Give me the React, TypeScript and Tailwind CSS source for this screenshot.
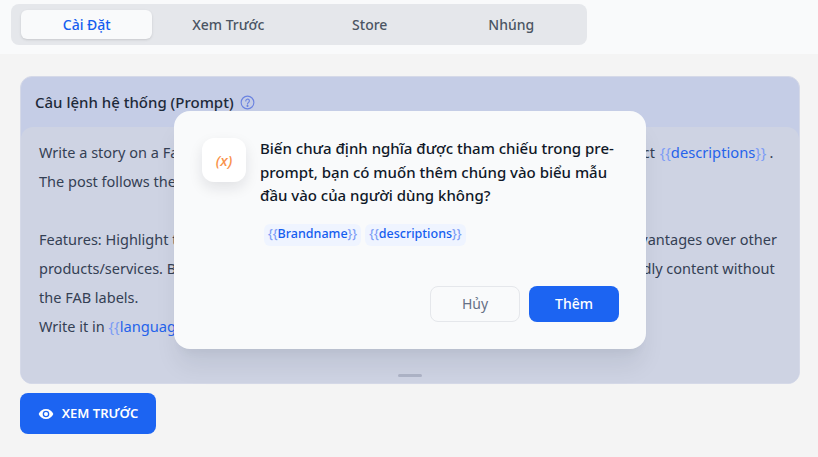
import React from 'react'

const tabs = ['Cài Đặt', 'Xem Trước', 'Store', 'Nhúng']

const Var = ({ children }: { children: React.ReactNode }) => (
  <span className="text-[14.7px] text-[#2563eb]">
    <span className="text-[#7c9cf5]">{'{{'}</span>{children}<span className="text-[#7c9cf5]">{'}}'}</span>
  </span>
)

const Chip = ({ name }: { name: string }) => (
  <span className="flex h-[22px] items-center rounded-md bg-[#eff4ff] px-[4px] text-[12.5px] font-medium text-[#155eef]">
    <span className="text-[#7c9cf5]">{'{{'}</span>{name}<span className="text-[#7c9cf5]">{'}}'}</span>
  </span>
)

export default function App() {
  return (
    <div className="flex h-[457px] w-[818px] flex-col overflow-hidden bg-[#f4f4f4] font-['Noto_Sans',sans-serif]">
      <div className="flex h-[54px] shrink-0 items-start bg-[#f9fafb] pl-[11px] pt-[4px]">
        <div className="flex h-[41px] w-[576px] items-center rounded-lg bg-[#e5e7eb] px-[5px]">
          {tabs.map((t, i) => (
            <div key={t} className="flex h-[29px] flex-1 items-center justify-center">
              {i === 0 ? (
                <div className="flex h-[29px] w-[131px] items-center justify-center rounded-md bg-[#f9fafb] text-sm font-medium text-[#155eef] shadow-sm">
                  {t}
                </div>
              ) : (
                <span className="text-sm font-medium text-[#4b5563]">{t}</span>
              )}
            </div>
          ))}
        </div>
      </div>

      <div className="relative flex-1 pl-5 pr-[18px] pt-[22px]">
        <div className="flex h-[308px] flex-col overflow-hidden rounded-xl border border-[#d5d9e8] bg-[#c5cde6]">
          <div className="flex h-[50px] shrink-0 items-center gap-[6px] px-[14px] text-[15px] font-medium text-[#1d2939]">
            Câu lệnh hệ thống (Prompt)
            <svg width="15" height="15" viewBox="0 0 16 16" fill="none" stroke="#6b83e0" strokeWidth="1.2">
              <circle cx="8" cy="8" r="6.8" />
              <path d="M6.2 6.3a1.9 1.9 0 1 1 2.9 1.6c-.7.4-1.1.8-1.1 1.6" strokeLinecap="round" />
              <circle cx="8" cy="11.6" r=".5" fill="#6b83e0" />
            </svg>
          </div>
          <div className="relative flex-1 rounded-t-xl bg-[#ced3e3] px-[18px] pt-[11px] text-[14.5px] leading-[29px] text-[#344054]">
            <div className="whitespace-nowrap">Write a story on a Facebook post for the brands {'{{'}Brandname{'}}'} that are about this product <span className="ml-[1px]"><Var>descriptions</Var></span><span className="ml-[3px]">.</span></div>
            <div className="whitespace-nowrap">The post follows the FAB formula as shown below.</div>
            <div className="h-[29px]" />
            <div className="whitespace-nowrap">Features: Highlight the outstanding features of the product, show all of the very main advantages over other</div>
            <div className="whitespace-nowrap">products/services. Benefits: Explain the value and the usefulness to the customer in friendly content without</div>
            <div className="whitespace-nowrap">the FAB labels.</div>
            <div className="whitespace-nowrap">Write it in <Var>language</Var></div>
            <div className="absolute bottom-[6px] left-1/2 h-[3px] w-[24px] -translate-x-1/2 rounded-sm bg-[#aeb4c7]" />
          </div>
        </div>
        <button className="mt-[9px] flex h-[41px] w-[136px] items-center justify-center gap-[8px] rounded-lg bg-[#1c64f2] text-[13px] font-semibold text-white">
          <svg width="16" height="16" viewBox="0 0 24 24" fill="white">
            <path d="M12 4.5C7 4.5 2.7 7.6 1 12c1.7 4.4 6 7.5 11 7.5s9.300-3.100 11-7.500c-1.700-4.400-6-7.500-11-7.500zm0 12.500a5 5 0 1 1 0-10 5 5 0 0 1 0 10zm0-8a3 3 0 1 0 0 6 3 3 0 0 0 0-6z" />
          </svg>
          XEM TRƯỚC
        </button>
      </div>

      <div className="absolute left-[174px] top-[111px] flex h-[238px] w-[472px] flex-col rounded-2xl bg-[#f9fafb] pl-[28px] pr-[27px] pt-[27px] shadow-[0_20px_24px_-4px_rgba(16,24,40,0.08),0_8px_8px_-4px_rgba(16,24,40,0.03)]">
        <div className="flex gap-[14px]">
          <div className="flex h-[44px] w-[44px] shrink-0 items-center justify-center rounded-xl bg-white text-[15px] font-medium italic text-[#f9924a] shadow-[0_6px_14px_rgba(16,24,40,0.1)]">
            (x)
          </div>
          <div className="-mt-px text-[15px] font-medium leading-[23.5px] text-[#101828]">
            Biến chưa định nghĩa được tham chiếu trong pre-prompt, bạn có muốn thêm chúng vào biểu mẫu đầu vào của người dùng không?
          </div>
        </div>
        <div className="mt-[16px] flex gap-[4px] pl-[62px]">
          <Chip name="Brandname" />
          <Chip name="descriptions" />
        </div>
        <div className="mt-[40px] flex justify-end gap-[9px]">
          <button className="h-[36px] w-[90px] rounded-lg border border-[#e5e7eb] text-sm text-[#667085]">Hủy</button>
          <button className="h-[36px] w-[90px] rounded-lg bg-[#1c64f2] text-sm font-medium text-white">Thêm</button>
        </div>
      </div>
    </div>
  )
}
